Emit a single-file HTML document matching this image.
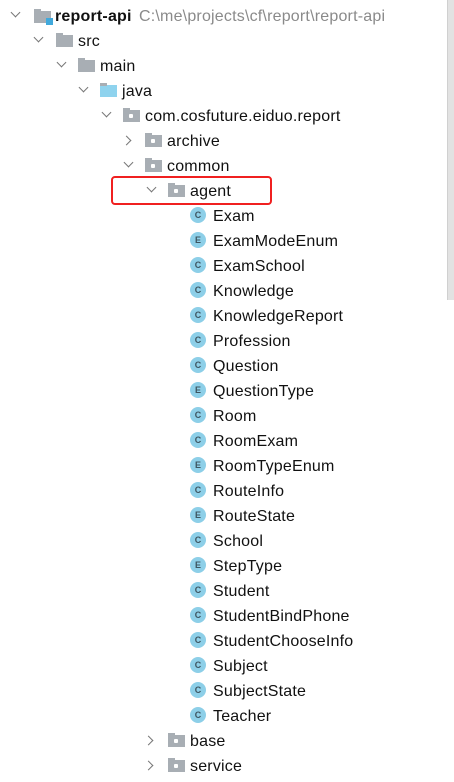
<!DOCTYPE html>
<html><head><meta charset="utf-8"><style>
body{margin:0;width:454px;height:782px;background:#fff;overflow:hidden;position:relative;font-family:"Liberation Sans","Noto Sans CJK SC",sans-serif;font-size:16px;color:#111}
.r{position:absolute;height:25px;line-height:27px;white-space:nowrap}
.t{position:absolute;letter-spacing:0.2px}
.chev{position:absolute;width:6px;height:6px;border-right:1.5px solid #777;border-bottom:1.5px solid #777}
.down{transform:rotate(45deg)}
.right{transform:rotate(-45deg)}
.fold{position:absolute;width:17px;height:12px;background:#a8aeb4;top:7px}
.fold:before{content:"";position:absolute;left:0;top:-2px;width:7px;height:3px;background:#a8aeb4}
.dot{position:absolute;left:6px;top:4px;width:4px;height:4px;background:#fff;border-radius:1px}
.ci{position:absolute;width:16px;height:16px;border-radius:50%;background:#8dcfe8;top:4px;font-size:9px;font-weight:bold;color:#3d5560;text-align:center;line-height:16px;letter-spacing:0}
</style></head><body>
<div style="position:absolute;left:447px;top:0;width:7px;height:300px;background:#e2e2e2;border-left:1px solid #d0d0d0"></div>
<div class="r" style="top:3px;left:0;width:440px">
<span class="chev down" style="left:12px;top:6px"></span>
<span class="fold" style="left:34px;top:8px"></span><span style="position:absolute;left:46px;top:15px;width:7px;height:7px;background:#40a9dc"></span>
<span class="t" style="left:55px;font-weight:bold">report-api</span>
<span class="t" style="left:139px;color:#8a8a8a">C:\me\projects\cf\report\report-api</span>
</div>
<div class="r" style="top:28px;left:0"><span class="chev down" style="left:35px;top:6px"></span><span class="fold" style="left:56px"></span><span class="t" style="left:78px">src</span></div>
<div class="r" style="top:53px;left:0"><span class="chev down" style="left:58px;top:6px"></span><span class="fold" style="left:78px"></span><span class="t" style="left:100px">main</span></div>
<div class="r" style="top:78px;left:0"><span class="chev down" style="left:80px;top:6px"></span><span class="fold" style="left:100px;background:#8fd3ee"></span><span class="t" style="left:122px">java</span></div>
<div class="r" style="top:103px;left:0"><span class="chev down" style="left:103px;top:6px"></span><span class="fold" style="left:123px"><span class="dot"></span></span><span class="t" style="left:145px">com.cosfuture.eiduo.report</span></div>
<div class="r" style="top:128px;left:0"><span class="chev right" style="left:123px;top:9px"></span><span class="fold" style="left:145px"><span class="dot"></span></span><span class="t" style="left:167px">archive</span></div>
<div class="r" style="top:153px;left:0"><span class="chev down" style="left:125px;top:6px"></span><span class="fold" style="left:145px"><span class="dot"></span></span><span class="t" style="left:167px">common</span></div>
<div class="r" style="top:178px;left:0"><span class="chev down" style="left:148px;top:6px"></span><span class="fold" style="left:168px"><span class="dot"></span></span><span class="t" style="left:190px">agent</span></div>
<div style="position:absolute;left:111px;top:176px;width:157px;height:25px;border:2.5px solid #f02020;border-radius:4px"></div>
<div class="r" style="top:728px;left:0"><span class="chev right" style="left:145px;top:9px"></span><span class="fold" style="left:168px"><span class="dot"></span></span><span class="t" style="left:190px">base</span></div>
<div class="r" style="top:753px;left:0"><span class="chev right" style="left:145px;top:9px"></span><span class="fold" style="left:168px"><span class="dot"></span></span><span class="t" style="left:190px">service</span></div>
<div class="r" style="top:203px"><span class="ci" style="left:190px">C</span><span class="t" style="left:213px">Exam</span></div>
<div class="r" style="top:228px"><span class="ci" style="left:190px">E</span><span class="t" style="left:213px">ExamModeEnum</span></div>
<div class="r" style="top:253px"><span class="ci" style="left:190px">C</span><span class="t" style="left:213px">ExamSchool</span></div>
<div class="r" style="top:278px"><span class="ci" style="left:190px">C</span><span class="t" style="left:213px">Knowledge</span></div>
<div class="r" style="top:303px"><span class="ci" style="left:190px">C</span><span class="t" style="left:213px">KnowledgeReport</span></div>
<div class="r" style="top:328px"><span class="ci" style="left:190px">C</span><span class="t" style="left:213px">Profession</span></div>
<div class="r" style="top:353px"><span class="ci" style="left:190px">C</span><span class="t" style="left:213px">Question</span></div>
<div class="r" style="top:378px"><span class="ci" style="left:190px">E</span><span class="t" style="left:213px">QuestionType</span></div>
<div class="r" style="top:403px"><span class="ci" style="left:190px">C</span><span class="t" style="left:213px">Room</span></div>
<div class="r" style="top:428px"><span class="ci" style="left:190px">C</span><span class="t" style="left:213px">RoomExam</span></div>
<div class="r" style="top:453px"><span class="ci" style="left:190px">E</span><span class="t" style="left:213px">RoomTypeEnum</span></div>
<div class="r" style="top:478px"><span class="ci" style="left:190px">C</span><span class="t" style="left:213px">RouteInfo</span></div>
<div class="r" style="top:503px"><span class="ci" style="left:190px">E</span><span class="t" style="left:213px">RouteState</span></div>
<div class="r" style="top:528px"><span class="ci" style="left:190px">C</span><span class="t" style="left:213px">School</span></div>
<div class="r" style="top:553px"><span class="ci" style="left:190px">E</span><span class="t" style="left:213px">StepType</span></div>
<div class="r" style="top:578px"><span class="ci" style="left:190px">C</span><span class="t" style="left:213px">Student</span></div>
<div class="r" style="top:603px"><span class="ci" style="left:190px">C</span><span class="t" style="left:213px">StudentBindPhone</span></div>
<div class="r" style="top:628px"><span class="ci" style="left:190px">C</span><span class="t" style="left:213px">StudentChooseInfo</span></div>
<div class="r" style="top:653px"><span class="ci" style="left:190px">C</span><span class="t" style="left:213px">Subject</span></div>
<div class="r" style="top:678px"><span class="ci" style="left:190px">C</span><span class="t" style="left:213px">SubjectState</span></div>
<div class="r" style="top:703px"><span class="ci" style="left:190px">C</span><span class="t" style="left:213px">Teacher</span></div>
</body></html>
